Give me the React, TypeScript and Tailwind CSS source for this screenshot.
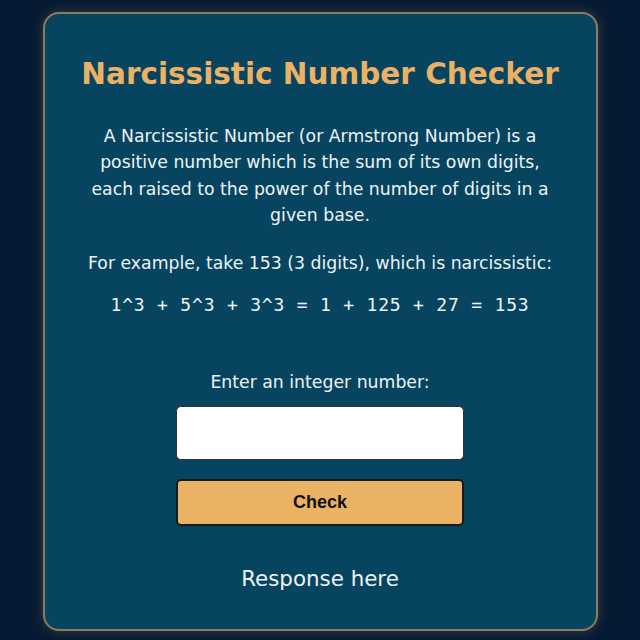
import { useState } from 'react';

export default function App() {
  const [value, setValue] = useState('');
  const [response, setResponse] = useState('Response here');

  const check = () => {
    const n = value.trim();
    if (!/^\d+$/.test(n)) {
      setResponse('Please enter a valid integer');
      return;
    }
    const sum = n.split('').reduce((acc, d) => acc + Math.pow(Number(d), n.length), 0);
    setResponse(sum === Number(n) ? `${n} is narcissistic` : `${n} is not narcissistic`);
  };

  return (
    <div className="w-[640px] h-[640px] bg-[#061a33] flex justify-center pt-[12px] font-['DejaVu_Sans',sans-serif]">
      <div className="w-[555px] h-[619px] bg-[#07445f] border-2 border-[#8a7d5e] rounded-[16px] shadow-[0_0_12px_rgba(233,176,101,0.25)] flex flex-col items-center px-6 text-center text-[#eef3f6]">
        {/* Title */}
        <h1 className="mt-[42px] text-[29.5px] leading-9 font-bold text-[#ebb266] whitespace-nowrap">
          Narcissistic Number Checker
        </h1>

        {/* Description */}
        <p className="mt-[31px] text-[17.3px] leading-[26.4px] whitespace-nowrap">
          A Narcissistic Number (or Armstrong Number) is a<br />
          positive number which is the sum of its own digits,<br />
          each raised to the power of the number of digits in a<br />
          given base.
        </p>
        <p className="mt-[21px] text-[17.3px] leading-[26px] whitespace-nowrap">
          For example, take 153 (3 digits), which is narcissistic:
        </p>
        <p className="mt-[16px] text-[18px] leading-[26px] tracking-[0.8px] font-['DejaVu_Sans_Mono',monospace] whitespace-pre">
          1^3 + 5^3 + 3^3 = 1 + 125 + 27 = 153
        </p>

        {/* Form */}
        <label htmlFor="num" className="mt-[51px] text-[17.3px] leading-[26px]">
          Enter an integer number:
        </label>
        <input
          id="num"
          value={value}
          onChange={e => setValue(e.target.value)}
          className="mt-[11px] w-[288px] h-[54px] bg-white rounded-[5px] border border-[#333] text-black text-lg px-3 outline-none"
        />
        <button
          onClick={check}
          className="mt-[19px] w-[288px] h-[47px] bg-[#ebb266] rounded-[5px] border-2 border-[#1a1a1a] text-[#111] text-[18px] font-bold font-['Liberation_Sans',Arial,sans-serif]"
        >
          Check
        </button>

        <p className="mt-[37px] text-[21.4px] leading-8">{response}</p>
      </div>
    </div>
  );
}
